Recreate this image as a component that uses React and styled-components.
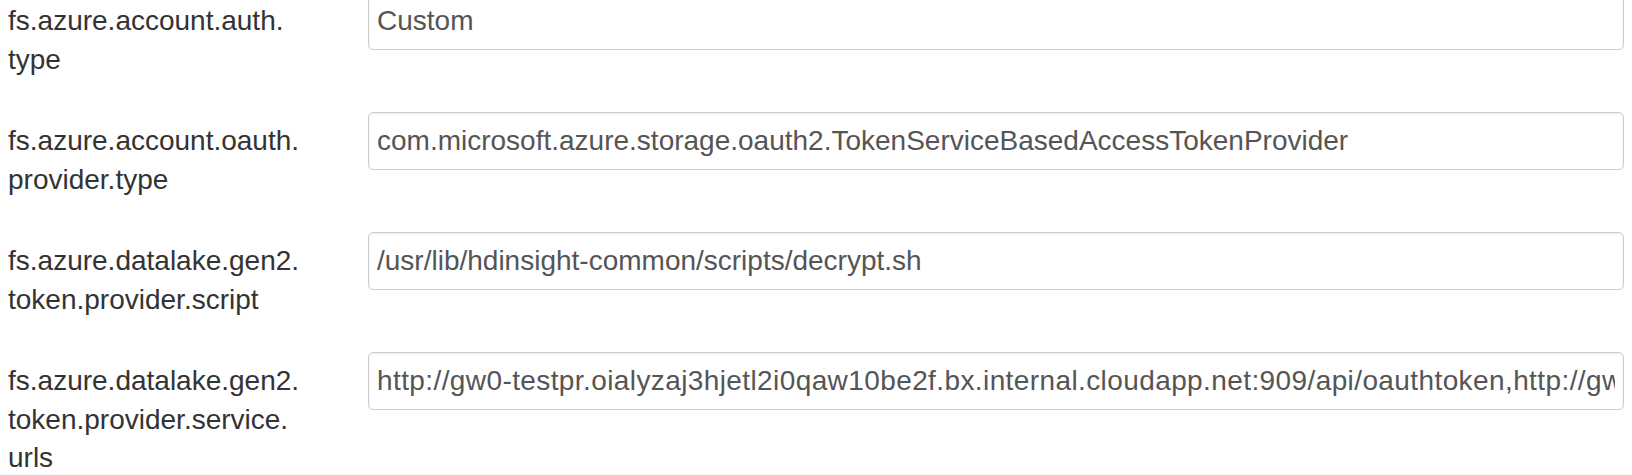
import React from "react";
import styled, { createGlobalStyle } from "styled-components";

const GlobalStyle = createGlobalStyle`
  html, body {
    margin: 0;
    padding: 0;
    background: #fff;
    overflow: hidden;
  }
  body {
    font-family: "Liberation Sans", Arial, Helvetica, sans-serif;
  }
`;

const Form = styled.form`
  margin-top: -8px;
  padding: 0 8px;
`;

const FormGroup = styled.div`
  display: grid;
  grid-template-columns: 345px 1fr;
  column-gap: 15px;
  align-items: start;
  margin-bottom: 33px;
`;

const Label = styled.label`
  padding-top: 10px;
  font-size: 28px;
  line-height: 38.5px;
  color: #333;
`;

const TextInput = styled.input`
  box-sizing: border-box;
  width: 100%;
  height: 58px;
  padding: 0 8px;
  font-family: inherit;
  font-size: 28px;
  letter-spacing: ${(p) => p.$tracking || 0}px;
  color: #555;
  background: #fff;
  border: 1px solid #ccc;
  border-radius: 5px;
  box-shadow: inset 0 1px 2px rgba(0, 0, 0, 0.075);
  outline: none;
`;

const settings = [
  {
    name: ["fs.azure.account.auth.", "type"],
    value: "Custom",
  },
  {
    name: ["fs.azure.account.oauth.", "provider.type"],
    value: "com.microsoft.azure.storage.oauth2.TokenServiceBasedAccessTokenProvider",
  },
  {
    name: ["fs.azure.datalake.gen2.", "token.provider.script"],
    value: "/usr/lib/hdinsight-common/scripts/decrypt.sh",
  },
  {
    name: ["fs.azure.datalake.gen2.", "token.provider.service.", "urls"],
    value:
      "http://gw0-testpr.oialyzaj3hjetl2i0qaw10be2f.bx.internal.cloudapp.net:909/api/oauthtoken,http://gw1-testpr.oialyzaj3hjetl2i0qaw10be2f.bx.internal.cloudapp.net:909/api/oauthtoken",
    tracking: 0.4,
  },
];

function App() {
  return (
    <>
      <GlobalStyle />
      <Form onSubmit={(e) => e.preventDefault()}>
        {settings.map((s) => (
          <FormGroup key={s.name.join("")}>
            <Label>
              {s.name.map((part, i) => (
                <React.Fragment key={i}>
                  {i > 0 && <br />}
                  {part}
                </React.Fragment>
              ))}
            </Label>
            <TextInput type="text" defaultValue={s.value} $tracking={s.tracking} />
          </FormGroup>
        ))}
      </Form>
    </>
  );
}

export default App;
